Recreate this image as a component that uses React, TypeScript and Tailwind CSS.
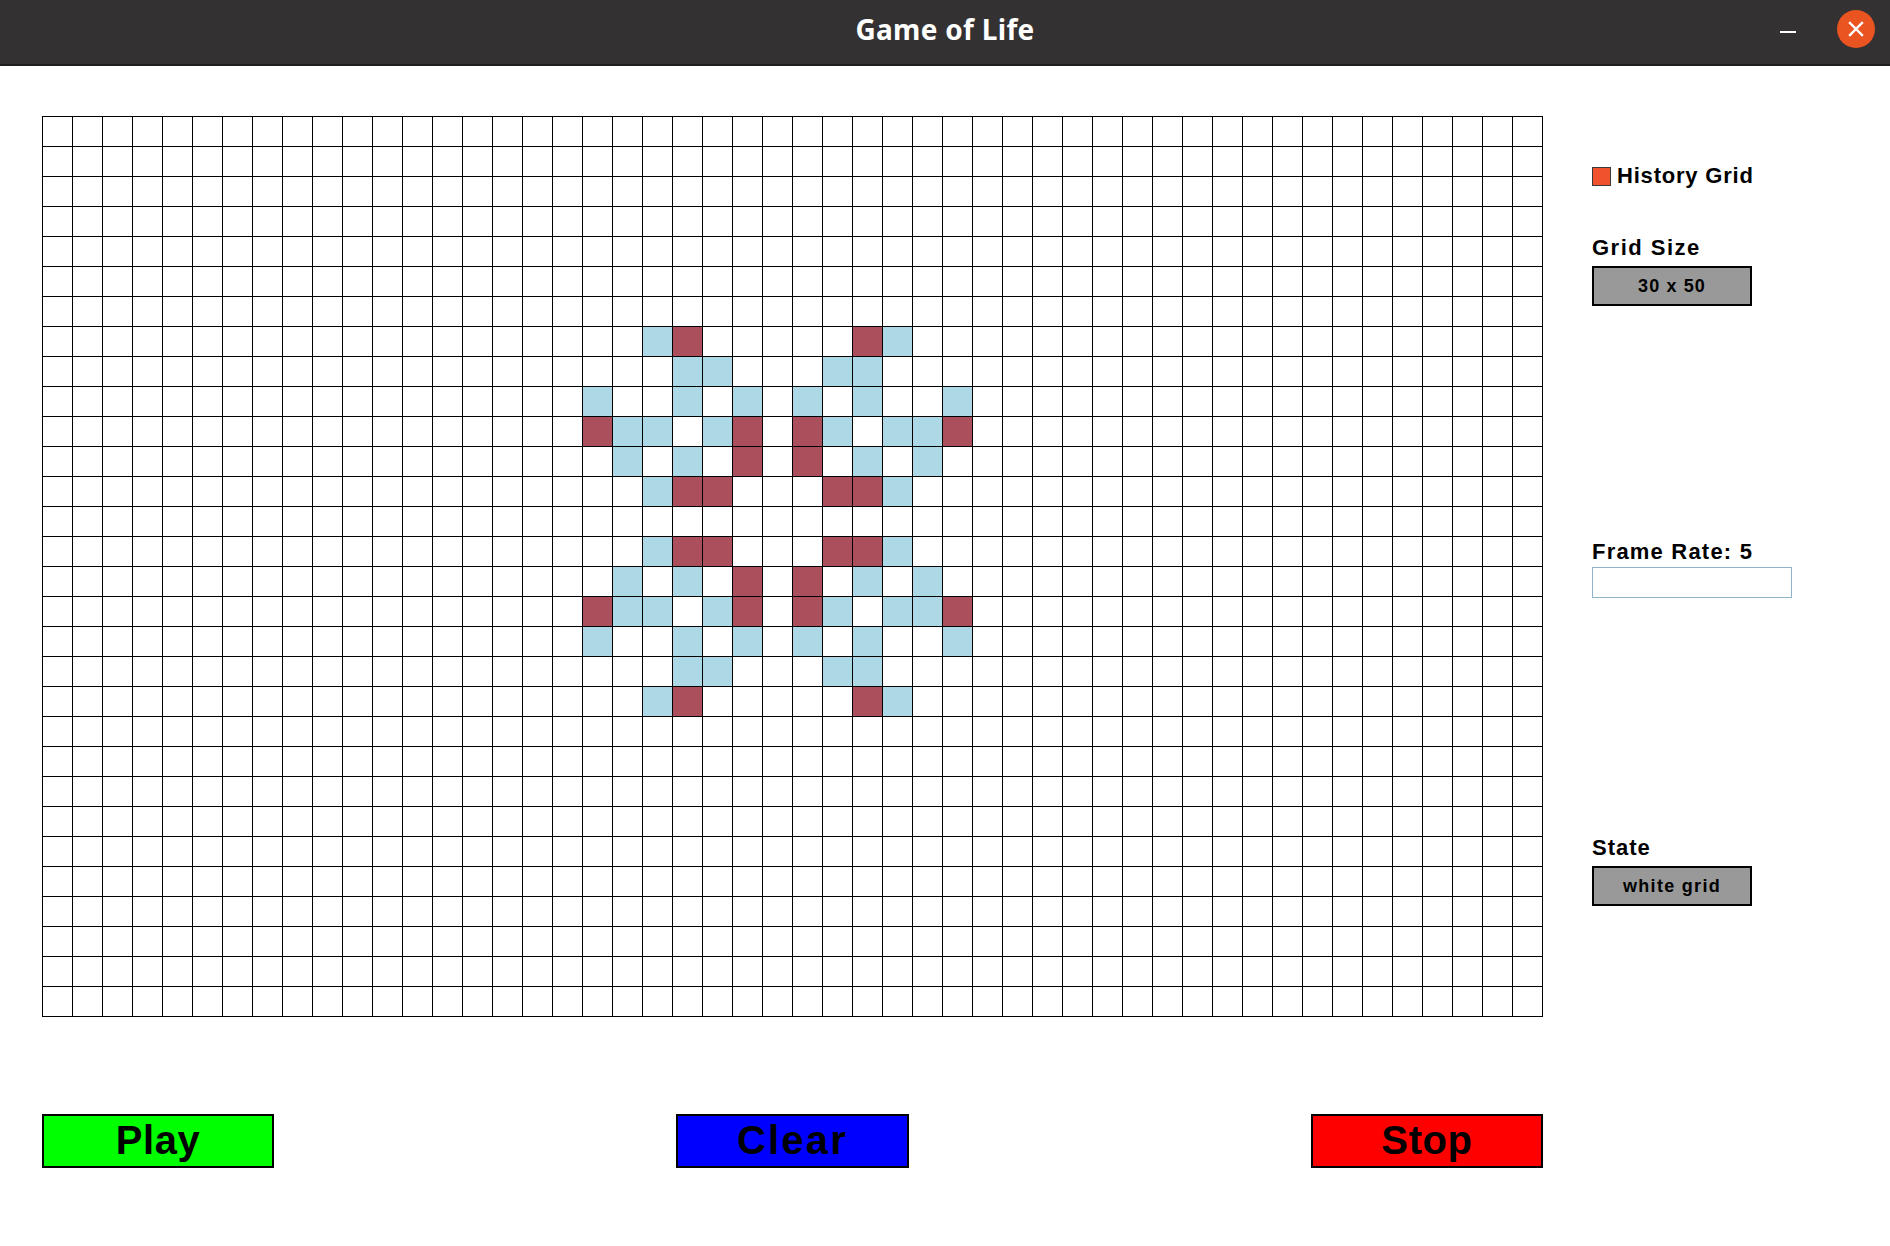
import React from 'react'

const ROWS = 30
const COLS = 50
const ORIGIN_ROW = 7
const ORIGIN_COL = 18

// pattern shown on the board, B = live (blue), R = history (red)
const TOP = [
  '..BR.....RB..',
  '...BB...BB...',
  'B..B.B.B.B..B',
  'RBB.BR.RB.BBR',
  '.B.B.R.R.B.B.',
  '..BRR...RRB..',
]
const PATTERN = [...TOP, '.............', ...[...TOP].reverse()]

function cellAt(r: number, c: number) {
  const pr = r - ORIGIN_ROW
  const pc = c - ORIGIN_COL
  if (pr < 0 || pr >= PATTERN.length) return '.'
  const row = PATTERN[pr]
  if (pc < 0 || pc >= row.length) return '.'
  return row[pc]
}

function Board() {
  const cells = []
  for (let r = 0; r < ROWS; r++) {
    for (let c = 0; c < COLS; c++) {
      const v = cellAt(r, c)
      cells.push(
        <div
          key={`${r}-${c}`}
          className={
            'w-[30px] h-[30px] border-r border-b border-black ' +
            (v === 'B' ? 'bg-[#add8e6]' : v === 'R' ? 'bg-[#ac4f5c]' : 'bg-white')
          }
        />
      )
    }
  }
  return (
    <div className="grid grid-cols-[repeat(50,30px)] border-l border-t border-black w-[1501px]">
      {cells}
    </div>
  )
}

export default function App() {
  return (
    <div className="w-[1890px] h-[1246px] bg-white flex flex-col font-['Liberation_Sans',Arial,sans-serif] text-black overflow-hidden">
      {/* Title bar */}
      <div className="h-[66px] shrink-0 bg-[#333132] border-b-2 border-[#1e1e1e] grid grid-cols-[1fr_auto_1fr] items-center pb-[6px]">
        <div />
        <div className="font-['Noto_Sans',sans-serif] font-bold text-[28px] leading-none text-white tracking-[0.3px]">
          Game of Life
        </div>
        <div className="flex items-center justify-end pr-[15px] gap-[41px]">
          <div className="w-[16px] h-[2px] bg-white mt-[6px]" />
          <div className="w-[38px] h-[38px] rounded-full bg-[#e95420] flex items-center justify-center">
            <svg width="18" height="18" viewBox="0 0 18 18">
              <path d="M3 3 L15 15 M15 3 L3 15" stroke="white" strokeWidth="2.4" strokeLinecap="square" />
            </svg>
          </div>
        </div>
      </div>

      {/* Body */}
      <div className="flex pl-[42px] pt-[50px] gap-[49px]">
        <div className="flex flex-col">
          <Board />
          <div className="flex justify-between mt-[97px] w-[1501px]">
            <button className="w-[232px] h-[54px] border-2 border-black bg-[#00ff00] font-bold text-[40px] leading-none tracking-[0.5px] pb-[2px]">
              Play
            </button>
            <button className="w-[233px] h-[54px] border-2 border-black bg-[#0000ff] font-bold text-[40px] leading-none tracking-[2.2px] pb-[2px]">
              Clear
            </button>
            <button className="w-[232px] h-[54px] border-2 border-black bg-[#ff0000] font-bold text-[40px] leading-none tracking-[0.6px] pb-[2px]">
              Stop
            </button>
          </div>
        </div>

        {/* Side panel */}
        <div className="flex flex-col items-start">
          <div className="flex items-center gap-[6px] mt-[48px] h-[24px]">
            <div className="w-[19px] h-[19px] bg-[#f0522d] border border-[#3a3a3a]" />
            <span className="font-bold text-[22px] leading-[24px] tracking-[0.8px]">History Grid</span>
          </div>

          <div className="mt-[48px] font-bold text-[22px] leading-[24px] tracking-[1.5px]">Grid Size</div>
          <div className="mt-[6px] w-[160px] h-[40px] border-2 border-black bg-[#999999] flex items-center justify-center font-bold text-[18px] leading-none tracking-[1.1px]">
            30 x 50
          </div>

          <div className="mt-[234px] font-bold text-[22px] leading-[24px] tracking-[1.2px]">Frame Rate: 5</div>
          <input
            className="mt-[3px] w-[200px] h-[31px] border border-[#8eb4cc] bg-white outline-none"
            defaultValue=""
          />

          <div className="mt-[238px] font-bold text-[22px] leading-[24px] tracking-[1px]">State</div>
          <div className="mt-[6px] w-[160px] h-[40px] border-2 border-black bg-[#999999] flex items-center justify-center font-bold text-[18px] leading-none tracking-[1.3px]">
            white grid
          </div>
        </div>
      </div>
    </div>
  )
}
